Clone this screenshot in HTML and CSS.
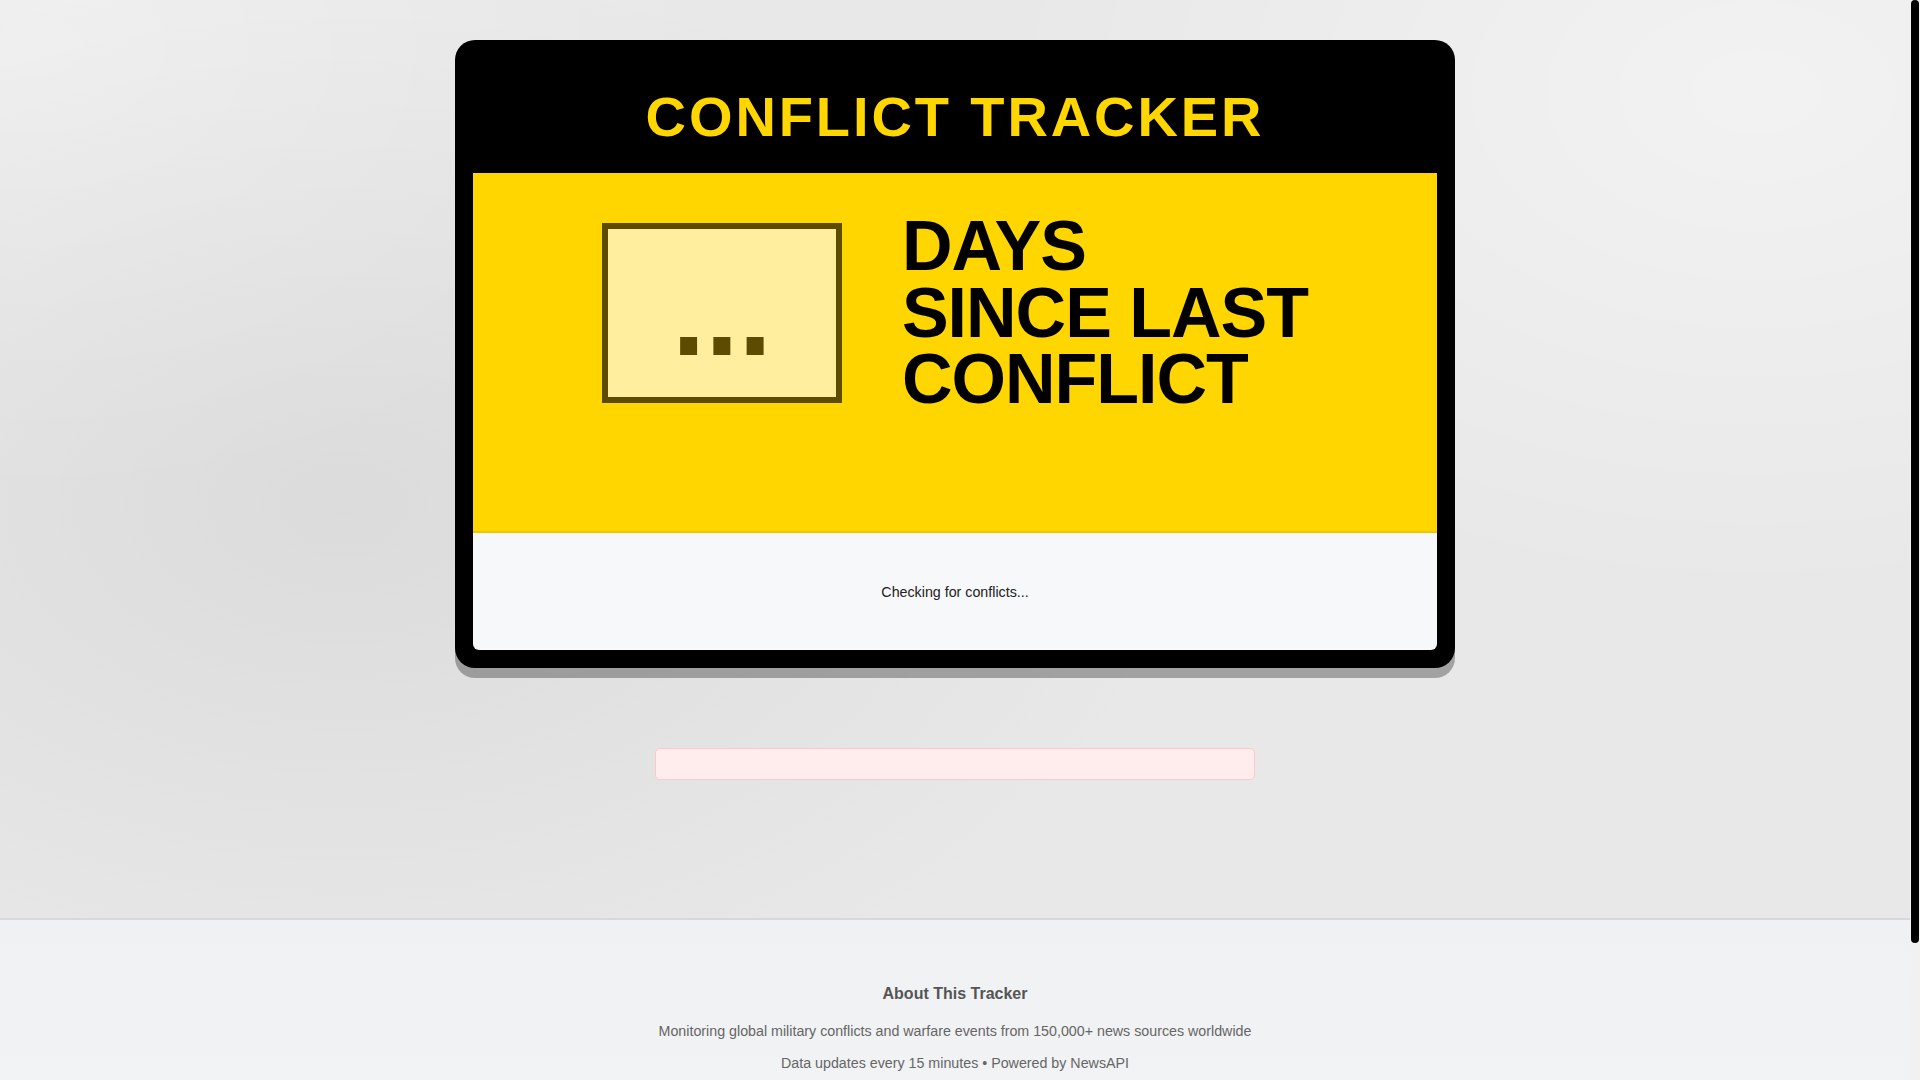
FILE: index.html
```html
<!DOCTYPE html>
<html lang="en">
<head>
<meta charset="utf-8">
<title>Conflict Tracker</title>
<link rel="stylesheet" href="styles.css">
</head>
<body>
<main class="page">
  <section class="card">
    <div class="panel">
      <header class="panel-head">
        <h1 class="title">CONFLICT TRACKER</h1>
      </header>
      <div class="counter">
        <div class="count-box"><span class="count">...</span></div>
        <h2 class="label">DAYS<br>SINCE LAST<br>CONFLICT</h2>
      </div>
      <div class="status">
        <p class="status-text">Checking for conflicts...</p>
      </div>
    </div>
  </section>
  <div class="error-box"></div>
</main>
<footer class="footer">
  <h3 class="footer-title">About This Tracker</h3>
  <p class="footer-text">Monitoring global military conflicts and warfare events from 150,000+ news sources worldwide</p>
  <p class="footer-text">Data updates every 15 minutes • Powered by NewsAPI</p>
</footer>
<div class="scrollbar" aria-hidden="true"><div class="scrollbar-thumb"></div></div>
</body>
</html>
```
FILE: styles.css
```css
html, body {
  margin: 0;
  padding: 0;
}

body {
  font-family: "Liberation Sans", Arial, sans-serif;
  background: #e8e8e8;
  margin-right: 10px;
}

.scrollbar {
  position: fixed;
  top: 0;
  right: 0;
  width: 10px;
  height: 100vh;
  background: #f1f1f1;
}

.scrollbar-thumb {
  width: 8px;
  margin-left: 1px;
  height: 943px;
  background: #000;
  border-radius: 4px;
}

.page {
  padding: 40px 0 138px;
  background-color: #e8e8e8;
  background-image:
    radial-gradient(ellipse 45% 60% at 18% 55%, rgba(0, 0, 0, 0.055), rgba(0, 0, 0, 0) 100%),
    radial-gradient(ellipse 40% 55% at 92% 10%, rgba(255, 255, 255, 0.45), rgba(255, 255, 255, 0) 100%),
    radial-gradient(ellipse 35% 50% at 2% 5%, rgba(255, 255, 255, 0.35), rgba(255, 255, 255, 0) 100%);
}

.card {
  box-sizing: border-box;
  width: 1000px;
  margin: 0 auto;
  padding: 18px;
  background: #000;
  border-radius: 20px;
  box-shadow: 0 10px 0 rgba(0, 0, 0, 0.3);
}

.panel {
  border-radius: 6px;
  overflow: hidden;
  background: #000;
}

.panel-head {
  background: #000;
  padding: 26px 20px 24px;
  text-align: center;
}

.title {
  margin: 0;
  font-size: 56px;
  line-height: 65px;
  font-weight: 700;
  letter-spacing: 2.9px;
  color: #ffd600;
}

.counter {
  display: flex;
  justify-content: center;
  align-items: center;
  gap: 60px;
  padding: 40px 40px 118px;
  background: #ffd600;
  border-bottom: 2px solid #efc800;
}

.count-box {
  box-sizing: border-box;
  width: 240px;
  height: 180px;
  border: 6px solid #5c4b00;
  background: #ffee9e;
  display: flex;
  align-items: center;
  justify-content: center;
}

.count {
  font-size: 120px;
  line-height: 1;
  font-weight: 700;
  color: #5c4b00;
}

.label {
  margin: 0;
  font-size: 70px;
  line-height: 0.95;
  font-weight: 700;
  letter-spacing: -1px;
  color: #000;
}

.status {
  background: #f7f8fa;
  padding: 51px 20px 49px;
  text-align: center;
}

.status-text {
  margin: 0;
  font-size: 14.25px;
  line-height: 17px;
  color: #222;
}

.error-box {
  box-sizing: border-box;
  width: 600px;
  margin: 80px auto 0;
  padding: 15px;
  background: #ffeded;
  border: 1px solid #ffc9c9;
  border-radius: 5px;
}

.footer {
  border-top: 2px solid #d6d8db;
  background: linear-gradient(180deg, #f0f1f3 0%, #f3f4f5 100%);
  padding: 65px 20px 152px;
  text-align: center;
}

.footer-title {
  margin: 0 0 17px;
  font-size: 16px;
  font-weight: 700;
  color: #555;
}

.footer-text {
  margin: 0 0 10px;
  font-size: 14.25px;
  line-height: 22px;
  color: #666;
}
```
